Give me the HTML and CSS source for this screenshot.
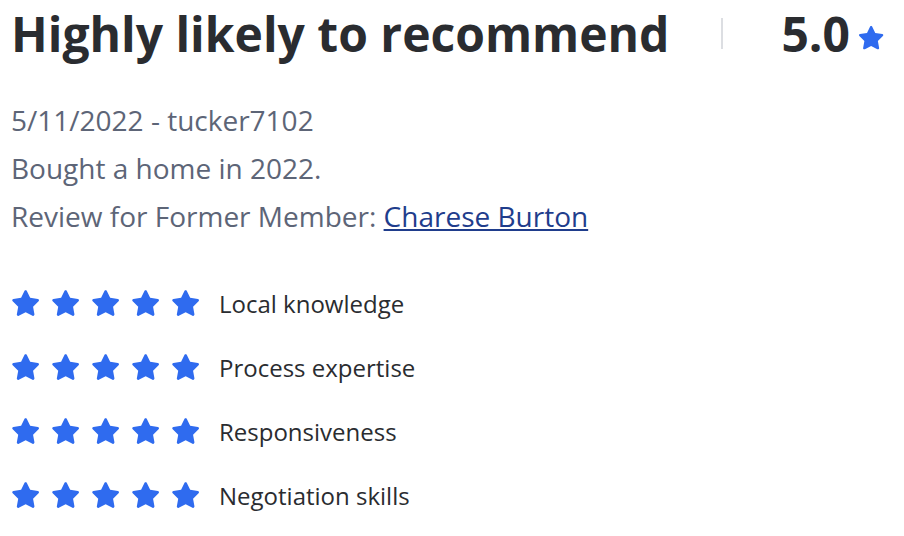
FILE: index.html
```html
<!DOCTYPE html>
<html lang="en">
<head>
  <meta charset="UTF-8">
  <title>Review</title>
  <link rel="stylesheet" href="styles.css">
</head>
<body>
  <svg width="0" height="0" class="defs">
    <symbol id="star" viewBox="0 0 24 24">
      <path d="M12 2.2c.4 0 .7.2.9.6l2.5 5.1 5.6.8c.8.1 1.1 1.1.5 1.7l-4 3.9 1 5.6c.1.8-.7 1.4-1.4 1l-5-2.6-5 2.6c-.7.4-1.6-.2-1.4-1l1-5.6-4-3.9c-.6-.6-.3-1.6.5-1.7l5.6-.8 2.5-5.1c.2-.4.5-.6.9-.6z"/>
    </symbol>
  </svg>

  <div class="review">
    <div class="review-head">
      <h1 class="title">Highly likely to recommend</h1>
      <span class="divider"></span>
      <div class="score">
        <span class="score-num">5.0</span>
        <svg class="star small"><use href="#star"/></svg>
      </div>
    </div>

    <div class="meta">
      <p>5/11/2022 - tucker7102</p>
      <p>Bought a home in 2022.</p>
      <p>Review for Former Member: <a href="#">Charese Burton</a></p>
    </div>

    <ul class="ratings">
      <li>
        <span class="stars">
          <svg class="star"><use href="#star"/></svg>
          <svg class="star"><use href="#star"/></svg>
          <svg class="star"><use href="#star"/></svg>
          <svg class="star"><use href="#star"/></svg>
          <svg class="star"><use href="#star"/></svg>
        </span>
        Local knowledge
      </li>
      <li>
        <span class="stars">
          <svg class="star"><use href="#star"/></svg>
          <svg class="star"><use href="#star"/></svg>
          <svg class="star"><use href="#star"/></svg>
          <svg class="star"><use href="#star"/></svg>
          <svg class="star"><use href="#star"/></svg>
        </span>
        Process expertise
      </li>
      <li>
        <span class="stars">
          <svg class="star"><use href="#star"/></svg>
          <svg class="star"><use href="#star"/></svg>
          <svg class="star"><use href="#star"/></svg>
          <svg class="star"><use href="#star"/></svg>
          <svg class="star"><use href="#star"/></svg>
        </span>
        Responsiveness
      </li>
      <li>
        <span class="stars">
          <svg class="star"><use href="#star"/></svg>
          <svg class="star"><use href="#star"/></svg>
          <svg class="star"><use href="#star"/></svg>
          <svg class="star"><use href="#star"/></svg>
          <svg class="star"><use href="#star"/></svg>
        </span>
        Negotiation skills
      </li>
    </ul>
  </div>
</body>
</html>
```

FILE: styles.css
```css
body {
  margin: 0;
  background: #fff;
  font-family: "Open Sans", "Liberation Sans", sans-serif;
  color: #2a2c30;
}
.defs {
  position: absolute;
}
.review {
  padding: 0 18px 0 11px;
}
.review-head {
  display: flex;
  align-items: center;
  height: 66px;
}
.title {
  margin: 0;
  font-size: 48px;
  font-weight: 700;
  color: #2a2c30;
  flex: 1;
}
.divider {
  width: 2px;
  height: 31px;
  background: #dcdee2;
  margin-right: 58px;
}
.score {
  display: flex;
  align-items: center;
  gap: 6px;
}
.score-num {
  font-size: 48px;
  font-weight: 700;
}
.star {
  width: 33px;
  height: 33px;
  fill: #2f6bef;
}
.star.small {
  width: 30px;
  height: 30px;
  margin-top: 10px;
}
.meta {
  margin-top: 30px;
  font-size: 28px;
  color: #5d6577;
}
.meta p {
  margin: 0;
  line-height: 48px;
}
.meta a {
  color: #1f3d8c;
}
.ratings {
  list-style: none;
  margin: 31px 0 0;
  padding: 0;
  font-size: 24px;
  color: #2a2c30;
}
.ratings li {
  display: flex;
  align-items: center;
  height: 64px;
}
.stars {
  display: flex;
  gap: 7px;
  margin: 0 17px 0 -2px;
}
```
